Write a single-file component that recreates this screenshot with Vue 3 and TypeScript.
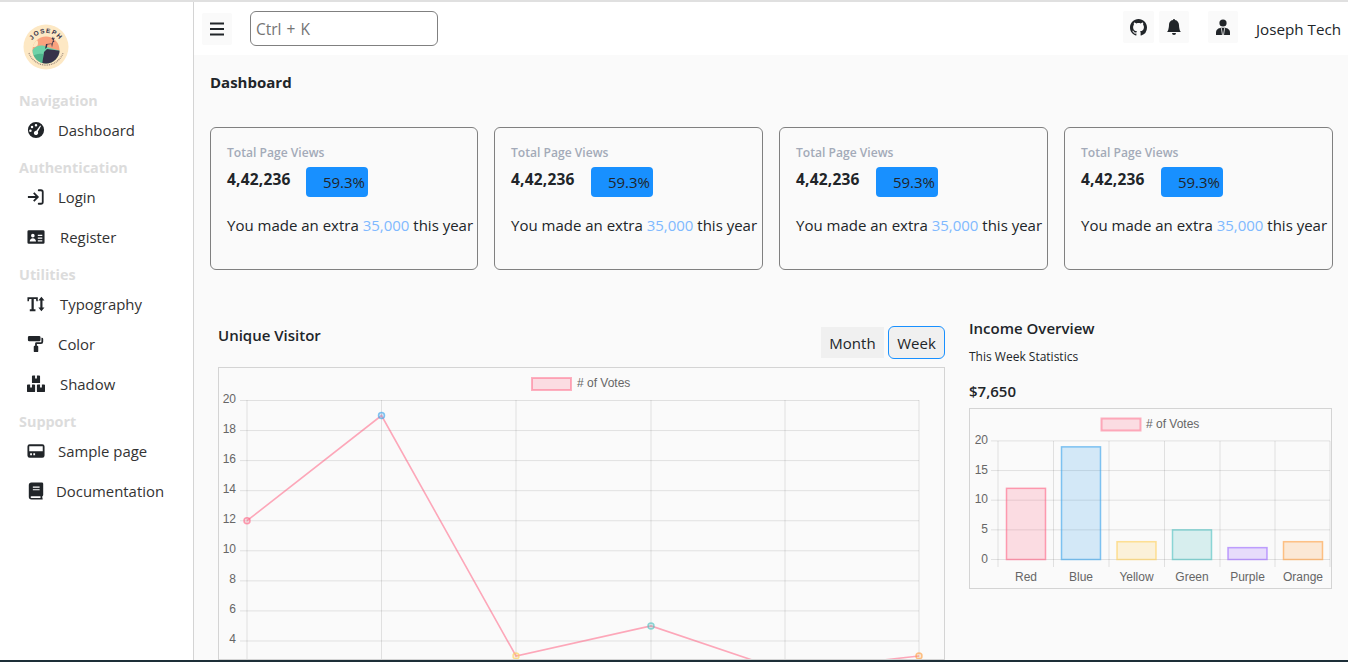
<template>
  <div class="page">
    <aside class="sidebar">
      <svg class="logo" viewBox="0 0 46 46">
        <defs>
          <clipPath id="logo-clip"><circle cx="23" cy="26" r="13.5" /></clipPath>
          <path id="logo-arc" d="M6 26A17 17 0 0 1 40 26" />
        </defs>
        <circle cx="23" cy="23" r="22.5" fill="#fde8c4" />
        <g clip-path="url(#logo-clip)">
          <rect x="8" y="12" width="30" height="28" fill="#f9a27e" />
          <circle cx="11" cy="19" r="4" fill="#fde8c4" />
          <path d="M8 28C12 22 17 20 24 23L38 27V40H8z" fill="#6dd3a8" />
          <path d="M8 33C12 30 16 29 20 30V40H8z" fill="#4fb58c" />
          <path d="M19 41L21 28L24 25L38 27V41z" fill="#35324a" />
        </g>
        <path transform="translate(1 1)" fill="#35324a" d="M21 24l1-5 6-.5 1-3.500-2-2 1 .5 1-2 .5 2 1.500-1-1.500 3 1 1-1.500 1-1 5-.6-3.500-4 .5-.5 3z" />
        <text class="logo-text"><textPath href="#logo-arc" startOffset="50%">JOSEPH</textPath></text>
        <path d="M6 29A18 18 0 0 0 40 29" fill="none" stroke="#5a4a4a" stroke-width="1.2" stroke-dasharray="1 .8" opacity=".6" />
      </svg>

      <template v-for="group in navGroups" :key="group.title">
        <div class="nav-title">{{ group.title }}</div>
        <a v-for="item in group.items" :key="item.label" class="nav-item">
          <svg class="nav-icon" viewBox="0 0 20 20" v-html="item.icon"></svg>
          <span :style="{ marginLeft: item.gap + 'px' }">{{ item.label }}</span>
        </a>
      </template>
    </aside>

    <div class="main">
      <header class="topbar">
        <button class="icon-btn menu-btn">
          <svg viewBox="0 0 16 16" width="16" height="16"><path d="M1 2.500h14M1 8h14M1 13.500h14" stroke="#212529" stroke-width="2" /></svg>
        </button>
        <input class="search" placeholder="Ctrl + K" />
        <div class="spacer"></div>
        <button class="icon-btn">
          <svg viewBox="0 0 16 16" width="17" height="17"><path fill="#212529" d="M8 0C3.58 0 0 3.58 0 8c0 3.54 2.29 6.53 5.47 7.59.4.07.55-.17.55-.38 0-.19-.01-.82-.01-1.49-2.01.37-2.53-.49-2.69-.94-.09-.23-.48-.94-.82-1.13-.28-.15-.68-.52-.01-.53.63-.01 1.08.58 1.23.82.72 1.21 1.87.87 2.33.66.07-.52.28-.87.51-1.07-1.78-.2-3.64-.89-3.64-3.95 0-.87.31-1.59.82-2.15-.08-.2-.36-1.02.08-2.12 0 0 .67-.21 2.2.82.64-.18 1.32-.27 2-.27s1.36.09 2 .27c1.53-1.04 2.2-.82 2.2-.82.44 1.1.16 1.92.08 2.12.51.56.82 1.27.82 2.15 0 3.07-1.87 3.75-3.65 3.95.29.25.54.73.54 1.48 0 1.07-.01 1.93-.01 2.2 0 .21.15.46.55.38A8.01 8.01 0 0 0 16 8c0-4.42-3.58-8-8-8z" /></svg>
        </button>
        <button class="icon-btn bell-btn">
          <svg viewBox="0 0 16 16" width="16" height="16"><path fill="#212529" d="M8 16a2 2 0 0 0 2-2H6a2 2 0 0 0 2 2zm.995-14.901a1 1 0 1 0-1.99 0A5.002 5.002 0 0 0 3 6c0 1.098-.5 6-2 7h14c-1.5-1-2-5.902-2-7 0-2.42-1.72-4.44-4.005-4.901z" /></svg>
        </button>
        <button class="icon-btn user-btn">
          <svg viewBox="0 0 16 16" width="16" height="16">
            <circle cx="8" cy="4" r="3.6" fill="#212529" />
            <path fill="#212529" d="M1 16v-2.500C1 10.500 3.500 9 6 8.700h4c2.500.3 5 1.800 5 4.800V16z" />
            <path d="M6.300 9l1.200 7M9.700 9l-1.200 7" stroke="#fafafa" stroke-width=".8" />
          </svg>
        </button>
        <span class="username">Joseph Tech</span>
      </header>

      <main class="content">
        <h1 class="page-title">Dashboard</h1>

        <section class="cards">
          <div v-for="n in 4" :key="n" class="card">
            <div class="card-label">Total Page Views</div>
            <div class="card-row">
              <strong class="card-value">4,42,236</strong>
              <span class="badge">59.3%</span>
            </div>
            <p class="card-text">You made an extra <span class="accent">35,000</span> this year</p>
          </div>
        </section>

        <section class="charts">
          <div class="visitor">
            <div class="visitor-head">
              <h2 class="chart-title">Unique Visitor</h2>
              <div class="toggle">
                <button class="toggle-btn month">Month</button>
                <button class="toggle-btn week">Week</button>
              </div>
            </div>
            <svg class="line-chart" width="727" height="293" viewBox="218 367 727 293">
              <rect x="532" y="378" width="39" height="12" fill="rgba(255,99,132,.2)" stroke="rgba(255,99,132,.5)" stroke-width="2" />
              <text x="577" y="387" class="legend">{{ legend }}</text>
              <line v-for="y in lineRows" :key="'h' + y.v" x1="240" x2="919" :y1="y.y" :y2="y.y" class="grid" />
              <line v-for="x in lineCols" :key="'v' + x" :x1="x" :x2="x" y1="400" y2="670" class="grid" />
              <text v-for="y in lineRows" :key="'t' + y.v" x="236" :y="y.y + 2" class="tick" text-anchor="end">{{ y.v }}</text>
              <polyline :points="linePoints" fill="none" stroke="rgba(255,99,132,.55)" stroke-width="1.6" />
              <circle v-for="p in lineDots" :key="p.x" :cx="p.x" :cy="p.y" r="3" :fill="p.fill" :stroke="p.stroke" stroke-width="1.5" />
            </svg>
          </div>

          <div class="income">
            <h2 class="income-title">Income Overview</h2>
            <p class="income-sub">This Week Statistics</p>
            <div class="income-value">$7,650</div>
            <svg class="bar-chart" width="363" height="181" viewBox="969 408 363 181">
              <rect x="1101.5" y="418.5" width="39" height="12" fill="rgba(255,99,132,.2)" stroke="rgba(255,99,132,.5)" stroke-width="2" />
              <text x="1146" y="428" class="legend">{{ legend }}</text>
              <line v-for="y in barRows" :key="'h' + y.v" x1="991" x2="1330" :y1="y.y" :y2="y.y" class="grid" />
              <line v-for="x in barCols" :key="'v' + x" :x1="x" :x2="x" y1="441" y2="567" class="grid" />
              <text v-for="y in barRows" :key="'t' + y.v" x="988" :y="y.y + 3" class="tick" text-anchor="end">{{ y.v }}</text>
              <rect v-for="b in bars" :key="b.name" :x="b.x" :y="b.y" width="39" :height="559.5 - b.y" :fill="b.fill" :stroke="b.stroke" stroke-width="1.5" />
              <text v-for="b in bars" :key="'l' + b.name" :x="b.x + 19.5" y="581" class="tick" text-anchor="middle">{{ b.name }}</text>
            </svg>
          </div>
        </section>
      </main>
    </div>
  </div>
</template>

<script setup lang="ts">
interface NavItem {
  label: string
  gap: number
  icon: string
}

const legend = '# of Votes'

// solid icons, drawn on a 20 box
const icons = {
  gauge:
    '<path fill-rule="evenodd" fill="#212529" d="M10 1a9 9 0 1 0 0 18 9 9 0 0 0 0-18zM10 3.400a1.400 1.400 0 1 1 0 2.800 1.400 1.400 0 0 1 0-2.800zM5.600 5.200a1.400 1.400 0 1 1 0 2.800 1.400 1.400 0 0 1 0-2.800zM3.800 9.400a1.400 1.400 0 1 1 0 2.800 1.400 1.400 0 0 1 0-2.800zM14.600 5l1 .5-3.600 6.400a2.400 2.400 0 1 1-1.600-1z"/>',
  login:
    '<path fill="none" stroke="#212529" stroke-width="2" d="M1 10H11M7.500 5.500 12 10 7.500 14.500"/><path fill="none" stroke="#212529" stroke-width="2" stroke-linecap="round" d="M13 2.500h2.500a2 2 0 0 1 2 2v11a2 2 0 0 1-2 2H13"/>',
  card:
    '<path fill-rule="evenodd" fill="#212529" d="M2 2.500h16A1.500 1.500 0 0 1 19.500 4v12a1.500 1.500 0 0 1-1.500 1.500H2A1.500 1.500 0 0 1 .5 16V4A1.500 1.500 0 0 1 2 2.500zM6.500 6.500a2 2 0 1 0 0 4 2 2 0 0 0 0-4zM3 15h7c0-2.300-1.500-3.700-3.500-3.700S3 12.700 3 15zM12 7.500v1.400h5V7.500zm0 3v1.400h5v-1.400zm0 3v1.400h5v-1.400z"/>',
  text:
    '<path fill="#212529" d="M.5 2.500h11.500V7h-1.600l-.4-2.600H7.500v11.400h1.900V18H3.100v-2.200H5V4.400H2.500L2.100 7H.5zM16 2l3.400 4h-2.200v8h2.200L16 18l-3.400-4h2.200V6h-2.200z"/>',
  roller:
    '<path fill="#212529" d="M2.500 1h11A1.500 1.500 0 0 1 15 2.500v3A1.500 1.500 0 0 1 13.500 7h-11A1.500 1.500 0 0 1 1 5.500v-3A1.500 1.500 0 0 1 2.500 1zM16 3h.5A1.500 1.500 0 0 1 18 4.500v3A2.500 2.500 0 0 1 15.500 10H11v2h.5a1 1 0 0 1 1 1v5a1 1 0 0 1-1 1h-3a1 1 0 0 1-1-1v-5a1 1 0 0 1 1-1H9V9.500A1.500 1.500 0 0 1 10.500 8h5a.7.7 0 0 0 .5-.7z"/>',
  boxes:
    '<path fill="#212529" d="M6.500 .5H9v3.500h2V.5h2.500a1 1 0 0 1 1 1V9h-9V1.500a1 1 0 0 1 1-1zM1 10.500h2.500V14h2v-3.500H8a1 1 0 0 1 1 1V18a1 1 0 0 1-1 1H1a1 1 0 0 1-1-1v-6.500a1 1 0 0 1 1-1zM12 10.500h2.500V14h2v-3.500H19a1 1 0 0 1 1 1V18a1 1 0 0 1-1 1h-7a1 1 0 0 1-1-1v-6.500a1 1 0 0 1 1-1z"/>',
  hdd:
    '<path fill-rule="evenodd" fill="#212529" d="M3 2.500h14A2.500 2.500 0 0 1 19.500 5v10a2.500 2.500 0 0 1-2.500 2.500H3A2.500 2.500 0 0 1 .5 15V5A2.500 2.500 0 0 1 3 2.500zM2.500 4.800v5.400h15V4.800zM3.500 12.500v2.200h2v-2.200zm3.500 0v2.200h2v-2.200z"/>',
  book:
    '<path fill-rule="evenodd" fill="#212529" d="M5 .5h11.500A1.500 1.500 0 0 1 18 2v12.500a1.500 1.500 0 0 1-1 1.400v2.100a1 1 0 0 1 .3 1.500H5a3 3 0 0 1-3-3v-13a3 3 0 0 1 3-3zM6.500 5v1.300h7.500V5zm0 3v1.300h7.500V8zM5 15.800a1 1 0 0 0 0 2h10v-2z"/>',
}

const navGroups: { title: string; items: NavItem[] }[] = [
  { title: 'Navigation', items: [{ label: 'Dashboard', gap: 13, icon: icons.gauge }] },
  {
    title: 'Authentication',
    items: [
      { label: 'Login', gap: 13, icon: icons.login },
      { label: 'Register', gap: 15, icon: icons.card },
    ],
  },
  {
    title: 'Utilities',
    items: [
      { label: 'Typography', gap: 15, icon: icons.text },
      { label: 'Color', gap: 13, icon: icons.roller },
      { label: 'Shadow', gap: 15, icon: icons.boxes },
    ],
  },
  {
    title: 'Support',
    items: [
      { label: 'Sample page', gap: 13, icon: icons.hdd },
      { label: 'Documentation', gap: 11, icon: icons.book },
    ],
  },
]

// line chart
const lineCols = [247, 381.5, 516, 651, 785, 919]
const lineRows = [20, 18, 16, 14, 12, 10, 8, 6, 4].map((v) => ({ v, y: 400.5 + (20 - v) * 15.03 }))
const votes = [12, 19, 3, 5, 2, 3]
const colors = [
  [255, 99, 132],
  [54, 162, 235],
  [255, 206, 86],
  [75, 192, 192],
  [153, 102, 255],
  [255, 159, 64],
]
const lineDots = votes.map((v, i) => ({
  x: lineCols[i],
  y: 400.5 + (20 - v) * 15.03,
  fill: `rgba(${colors[i].join(',')},.2)`,
  stroke: `rgba(${colors[i].join(',')},.6)`,
}))
const linePoints = lineDots.map((p) => `${p.x},${p.y}`).join(' ')

// bar chart
const barCols = [998, 1053.5, 1109, 1164.5, 1220, 1275, 1330]
const barRows = [20, 15, 10, 5, 0].map((v) => ({ v, y: 559.5 - v * 5.93 }))
const barX = [1006.5, 1061.5, 1117, 1172.5, 1228, 1283.5]
const names = ['Red', 'Blue', 'Yellow', 'Green', 'Purple', 'Orange']
const bars = names.map((name, i) => ({
  name,
  x: barX[i],
  y: 559.5 - votes[i] * 5.93,
  fill: `rgba(${colors[i].join(',')},.2)`,
  stroke: `rgba(${colors[i].join(',')},.6)`,
}))
</script>

<style>
html,
body {
  margin: 0;
  overflow: hidden;
}
</style>

<style scoped>
.page {
  display: flex;
  height: 662px;
  overflow: hidden;
  box-sizing: border-box;
  border-top: 2px solid #e0e0e0;
  border-bottom: 2px solid #1d2f38;
  font-family: "Open Sans", "Noto Sans", sans-serif;
  color: #212529;
  background: #fff;
}

.sidebar {
  width: 194px;
  flex-shrink: 0;
  box-sizing: border-box;
  border-right: 1px solid #d4d4d4;
  padding: 22px 0 0 19px;
}

.logo {
  display: block;
  width: 46px;
  height: 46px;
  margin: 0 0 21px 4px;
}

.logo-text {
  font: 700 6.5px "Liberation Sans", sans-serif;
  fill: #35324a;
  text-anchor: middle;
  letter-spacing: 1px;
}

.nav-title {
  margin: 8px 0 -1px;
  font-size: 14.4px;
  font-weight: 700;
  line-height: 20px;
  color: #dcdcdc;
}

.nav-item {
  display: flex;
  align-items: center;
  height: 40px;
  padding-left: 8px;
  font-size: 14.9px;
  color: #333;
}

.nav-icon {
  width: 18px;
  height: 18px;
  flex-shrink: 0;
}

.main {
  flex: 1;
  min-width: 0;
  background: #fafafa;
}

.topbar {
  display: flex;
  align-items: center;
  height: 53px;
  padding: 0 7px 0 8px;
  box-sizing: border-box;
  background: #fff;
}

.icon-btn {
  display: flex;
  align-items: center;
  justify-content: center;
  width: 31px;
  height: 32px;
  padding: 0;
  border: 0;
  border-radius: 2px;
  background: #fafafa;
  margin-top: -3px;
}

.menu-btn {
  margin: 1px 18px 0 0;
  width: 30px;
}

.search {
  width: 188px;
  height: 35px;
  box-sizing: border-box;
  padding: 0 5px;
  border: 1px solid #808080;
  border-radius: 6px;
  font: 15.5px "Open Sans", sans-serif;
  word-spacing: 1px;
  outline: none;
}

.search::placeholder {
  color: #757575;
}

.spacer {
  flex: 1;
}

.bell-btn {
  margin-left: 5px;
  width: 30px;
}

.user-btn {
  margin-left: 19px;
  margin-right: 18px;
  width: 30px;
}

.username {
  font-size: 15.2px;
  color: #212529;
}

.content {
  padding: 0 15px 0 16px;
}

.page-title {
  margin: 0;
  padding-top: 16px;
  font-size: 15px;
  font-weight: 700;
  line-height: 22px;
}

.cards {
  display: grid;
  grid-template-columns: 268px 269px 269px 269px;
  gap: 16px;
  margin-top: 34px;
}

.card {
  height: 143px;
  box-sizing: border-box;
  padding: 16px 0 0 16px;
  border: 1px solid #808080;
  border-radius: 6px;
  white-space: nowrap;
}

.card-label {
  font-size: 12.1px;
  font-weight: 600;
  line-height: 18px;
  color: #a3aab8;
}

.card-row {
  display: flex;
  margin-top: 5px;
}

.card-value {
  width: 80px;
  font-size: 15.5px;
  letter-spacing: 0.2px;
  font-weight: 700;
  line-height: 24px;
}

.card:first-child .card-value {
  width: 79px;
}

.badge {
  width: 62px;
  height: 30px;
  box-sizing: border-box;
  padding: 3px 3px 0 0;
  border-radius: 4px;
  background: #1890ff;
  text-align: right;
  font-size: 15px;
  line-height: 24px;
}

.card-text {
  margin: 17px 0 0;
  font-size: 15px;
  line-height: 22px;
}

.accent {
  color: #7fb9ff;
}

.charts {
  display: flex;
  margin-top: 50px;
}

.visitor {
  width: 727px;
  margin-left: 8px;
  flex-shrink: 0;
}

.visitor-head {
  display: flex;
  justify-content: space-between;
  align-items: flex-start;
  height: 47px;
}

.chart-title {
  margin: 0;
  padding-top: 4px;
  font-size: 15px;
  font-weight: 600;
  line-height: 22px;
}

.toggle {
  display: flex;
  gap: 4px;
  margin-top: 7px;
}

.toggle-btn {
  height: 31px;
  padding: 0;
  border: 1px solid transparent;
  background: #f0f0f0;
  font: 15px "Open Sans", sans-serif;
  color: #212529;
}

.month {
  width: 63px;
}

.week {
  width: 57px;
  height: 33px;
  margin-top: -1px;
  border-color: #1890ff;
  border-radius: 6px;
}

.line-chart,
.bar-chart {
  display: block;
  box-sizing: border-box;
  outline: 1px solid #d4d4d4;
  outline-offset: -1px;
}

.income {
  margin: -3px 0 0 24px;
  width: 363px;
}

.income-title {
  margin: 0;
  font-size: 15px;
  font-weight: 600;
  line-height: 22px;
}

.income-sub {
  margin: 9px 0 0;
  font-size: 12px;
  line-height: 18px;
}

.income-value {
  margin: 14px 0 6px;
  font-size: 15px;
  font-weight: 600;
  line-height: 22px;
}

.grid {
  stroke: rgba(0, 0, 0, 0.1);
  stroke-width: 1;
}

.tick,
.legend {
  font: 12px "Liberation Sans", sans-serif;
  fill: #666;
}
</style>
